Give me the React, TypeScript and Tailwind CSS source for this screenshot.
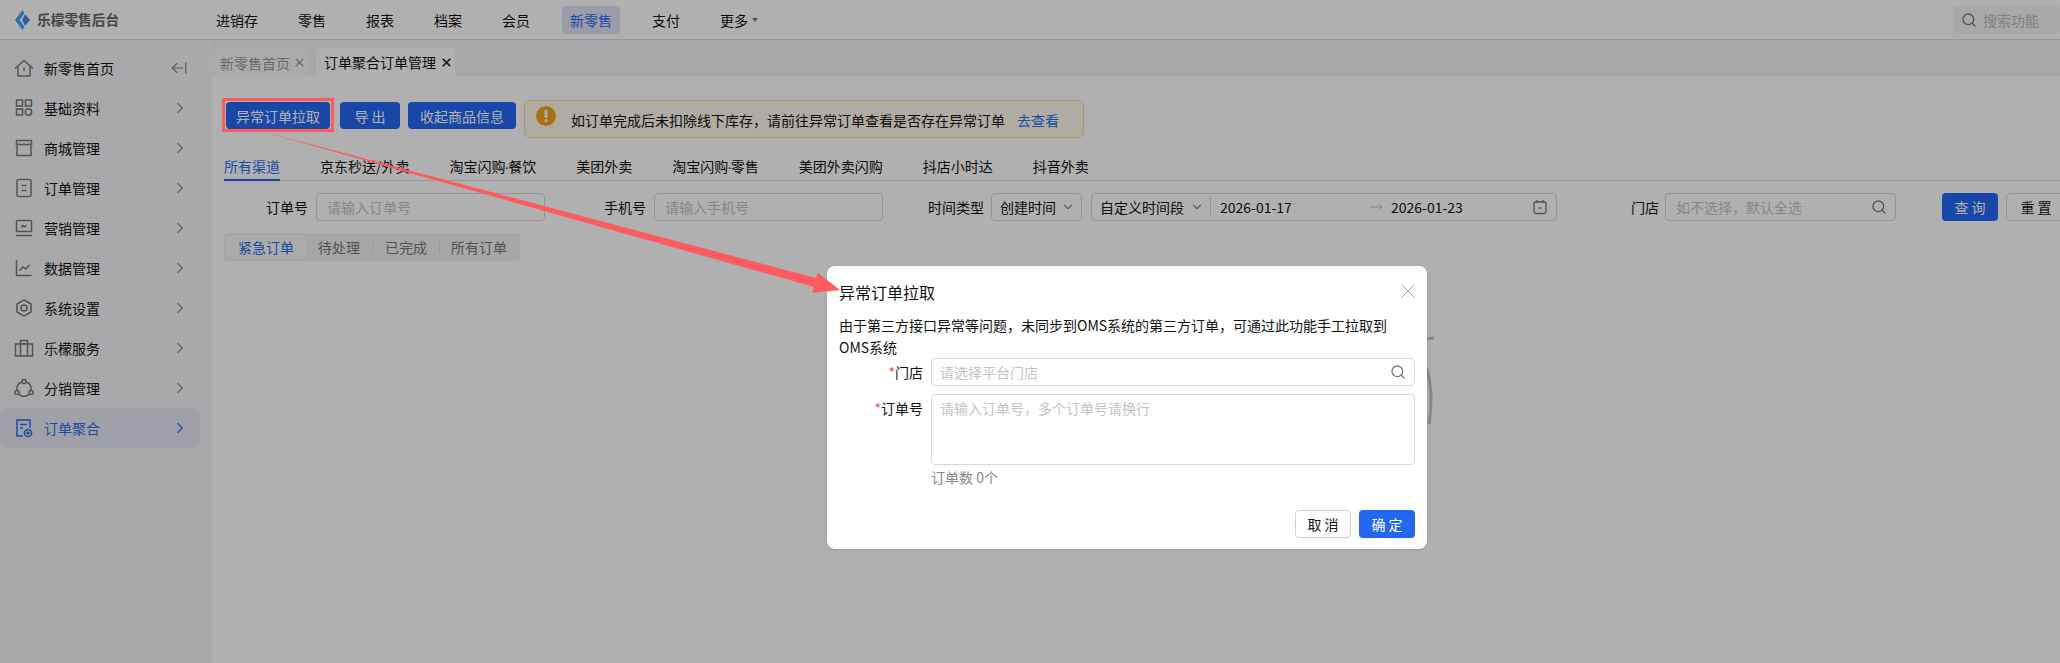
import React from 'react'
import { ArrowLeftFromLine, ChevronDown, ChevronRight, MoveRight, Search, X } from 'lucide-react'

const navItems = ['进销存', '零售', '报表', '档案', '会员', '新零售', '支付']
const channels = ['所有渠道', '京东秒送/外卖', '淘宝闪购|餐饮', '美团外卖', '淘宝闪购|零售', '美团外卖闪购', '抖店小时达', '抖音外卖']

const iconProps = {
    viewBox: '0 0 20 20',
    fill: 'none',
    stroke: 'currentColor',
    strokeWidth: 1.5,
    className: 'w-5 h-5 shrink-0',
}

const sideItems: { label: string; icon: React.ReactNode }[] = [
    {
        label: '新零售首页',
        icon: (
            <svg {...iconProps}>
                <path d="M1 10.5 10 2.5l9 8M4 8.5V18h12V8.5M10 9.5v3.5" />
            </svg>
        ),
    },
    {
        label: '基础资料',
        icon: (
            <svg {...iconProps}>
                <rect x="2.5" y="2" width="6" height="6" />
                <rect x="11.5" y="2" width="6" height="6" />
                <rect x="2.5" y="11" width="6" height="6" />
                <circle cx="14.5" cy="14" r="3.2" />
            </svg>
        ),
    },
    {
        label: '商城管理',
        icon: (
            <svg {...iconProps}>
                <path d="M3 8v9.5h14V8M2.5 2.5h15V7l-2.5-1-2.5 1-2.5-1-2.5 1-2.5-1-2.5 1z" />
            </svg>
        ),
    },
    {
        label: '订单管理',
        icon: (
            <svg {...iconProps}>
                <rect x="3" y="1.5" width="14" height="17" rx="1.5" />
                <path d="M7.5 7.5h5M7.5 12.5h5" />
            </svg>
        ),
    },
    {
        label: '营销管理',
        icon: (
            <svg {...iconProps}>
                <rect x="2.5" y="2.5" width="15" height="11" rx="1" />
                <path d="M2 17.5h16M7 9.5l2-2 1.5 1.5 2-2" />
            </svg>
        ),
    },
    {
        label: '数据管理',
        icon: (
            <svg {...iconProps}>
                <path d="M2.5 2v15.5h15M5.5 12.5l3.5-3.5 2.5 2 4-4" />
            </svg>
        ),
    },
    {
        label: '系统设置',
        icon: (
            <svg {...iconProps}>
                <path d="M10 2l7 4v8l-7 4-7-4V6z" />
                <circle cx="10" cy="10" r="3" />
            </svg>
        ),
    },
    {
        label: '乐檬服务',
        icon: (
            <svg {...iconProps}>
                <rect x="1.5" y="6" width="17" height="12" />
                <path d="M6.5 6V2.5h7V6M6.5 6v12M13.5 6v12" />
            </svg>
        ),
    },
    {
        label: '分销管理',
        icon: (
            <svg {...iconProps}>
                <path d="M7.5 4a7.5 7.5 0 0 0-4.5 8M17 12a7.5 7.5 0 0 0-4.5-8M4.5 16a7.5 7.5 0 0 0 11 0" />
                <circle cx="10" cy="3.5" r="2" />
                <circle cx="3" cy="14.5" r="2" />
                <circle cx="17" cy="14.5" r="2" />
            </svg>
        ),
    },
    {
        label: '订单聚合',
        icon: (
            <svg {...iconProps}>
                <path d="M9 18H3V2h13v8M6 6.5h7M6 10h3" />
                <circle cx="14" cy="15" r="3.6" />
                <circle cx="14" cy="15" r="1" />
            </svg>
        ),
    },
]

const fieldClass = 'shrink-0 h-7 px-2.5 border border-[#d9d9d9] rounded-[4px] bg-white text-sm outline-none placeholder:text-[#c4c4c4]'

const Logo = () => (
    <svg viewBox="0 0 15 20" className="w-[15px] h-5 shrink-0">
        <path d="M7.5 0 9.5 3.2 4.6 10l4.9 6.8L7.5 20 0 10z" fill="#4c9ff0" />
        <path d="M10.2 4.2 15 10l-4.8 5.8L7 10z" fill="#3f87e6" />
    </svg>
)

const App = () => {
    return (
        <div className="relative w-[2060px] h-[663px] overflow-hidden bg-white text-sm text-[#111] font-['Noto_Sans_CJK_SC',sans-serif]">
            {/* top bar */}
            <header className="flex items-center h-10 border-b border-[#dcdcdc]">
                <div className="flex items-center w-[208px] pl-[15px] gap-[7px]">
                    <Logo />
                    <span className="font-semibold text-[#666] text-[13.7px]">乐檬零售后台</span>
                </div>
                <nav className="flex gap-6">
                    {navItems.map((item) => (
                        <span
                            key={item}
                            className={
                                item === '新零售'
                                    ? 'h-7 px-2 leading-7 rounded bg-[#dfe4f5] text-[#2c6cf0]'
                                    : 'h-7 px-2 leading-7'
                            }
                        >
                            {item}
                        </span>
                    ))}
                    <span className="h-7 px-2 leading-7 flex items-center gap-1">
                        更多
                        <span className="w-0 h-0 border-x-[3.5px] border-x-transparent border-t-4 border-t-[#777]" />
                    </span>
                </nav>
                <div className="ml-auto flex items-center w-[107px] h-7 pl-2 gap-1.5 rounded bg-[#f2f3f5] text-[#bbb]">
                    <Search size={16} className="text-[#777]" />
                    <span>搜索功能</span>
                </div>
            </header>

            <div className="flex h-[623px]">
                {/* sidebar */}
                <aside className="w-[212px] shrink-0 pt-2 bg-[#f5f5f8]">
                    {sideItems.map((item, index) => {
                        const active = item.label === '订单聚合'
                        return (
                            <div
                                key={item.label}
                                className={
                                    active
                                        ? 'flex items-center h-10 w-[200px] pl-[14px] rounded-lg bg-[#e8eaf3] text-[#2c6cf0]'
                                        : 'flex items-center h-10 w-[200px] pl-[14px]'
                                }
                            >
                                <span className={active ? 'text-[#2c6cf0]' : 'text-[#777]'}>{item.icon}</span>
                                <span className="ml-[10px] flex-1">{item.label}</span>
                                {index === 0 ? (
                                    <ArrowLeftFromLine size={18} strokeWidth={1.5} className="mr-[12px] text-[#888]" />
                                ) : (
                                    <ChevronRight
                                        size={18}
                                        strokeWidth={1.5}
                                        className={active ? 'mr-[11px] text-[#2c6cf0]' : 'mr-[11px] text-[#888]'}
                                    />
                                )}
                            </div>
                        )
                    })}
                </aside>

                <main className="flex-1 min-w-0">
                    {/* page tabs */}
                    <div className="flex items-end h-9 gap-1.5 bg-[#f1f2f5]">
                        <div className="flex items-center gap-[3px] w-[98px] h-[27px] pl-2 rounded-t bg-[#f7f7f9] text-[#999]">
                            新零售首页
                            <X size={13} strokeWidth={2.5} />
                        </div>
                        <div className="flex items-center gap-1 w-[139px] h-7 pl-2 rounded-t bg-white">
                            订单聚合订单管理
                            <X size={13} strokeWidth={3} />
                        </div>
                    </div>

                    <div className="pl-3 pt-6">
                        {/* actions + notice */}
                        <div className="flex items-start h-[38px]">
                            <button className="ml-[2px] mt-[2px] w-[104px] h-[27px] rounded-sm bg-[#2468f2] text-white">异常订单拉取</button>
                            <button className="ml-[10px] mt-[2px] w-[60px] h-[27px] rounded bg-[#2468f2] text-white">导 出</button>
                            <button className="ml-2 mt-[2px] w-[108px] h-[27px] rounded bg-[#2468f2] text-white">收起商品信息</button>
                            <div className="relative ml-2 w-[560px] h-[38px] rounded-md border border-[#fbdc8f] bg-[#fffaeb] pl-[46px] pt-[9px]">
                                <svg viewBox="0 0 20 20" className="absolute left-[11px] top-[5px] w-5 h-5">
                                    <circle cx="10" cy="10" r="10" fill="#f2a516" />
                                    <rect x="8.5" y="4" width="3" height="8" rx="1" fill="#fff" />
                                    <rect x="8.5" y="13" width="3" height="3" rx="1" fill="#fff" />
                                </svg>
                                如订单完成后未扣除线下库存，请前往异常订单查看是否存在异常订单
                                <span className="ml-3 text-[#2c6cf0]">去查看</span>
                            </div>
                        </div>

                        {/* channels */}
                        <div className="flex gap-10 h-[29px] mt-[14px] border-b border-[#dcdcdc]">
                            {channels.map((channel, index) => {
                                const [head, tail] = channel.split('|')
                                return (
                                    <span
                                        key={channel}
                                        className={
                                            index === 0
                                                ? 'h-[29px] leading-7 border-b-2 border-[#2468f2] text-[#2c6cf0]'
                                                : 'h-[29px] leading-7'
                                        }
                                    >
                                        {head}
                                        {tail && <span className="-mx-px font-['Liberation_Sans']">·</span>}
                                        {tail}
                                    </span>
                                )
                            })}
                        </div>

                        {/* filters */}
                        <div className="flex items-center h-7 mt-3 whitespace-nowrap">
                            <span className="ml-[42px] shrink-0">订单号</span>
                            <input className={`ml-2 w-[229px] ${fieldClass}`} placeholder="请输入订单号" />
                            <span className="ml-[59px] shrink-0">手机号</span>
                            <input className={`ml-2 w-[229px] ${fieldClass}`} placeholder="请输入手机号" />
                            <span className="ml-[45px] shrink-0">时间类型</span>
                            <div className="flex shrink-0 items-center justify-between ml-[7px] w-[91px] h-7 pl-2 pr-1.5 border border-[#d9d9d9] rounded">
                                创建时间
                                <ChevronDown size={14} className="text-[#888]" />
                            </div>
                            <div className="flex shrink-0 items-center ml-[9px] w-[466px] h-7 pl-2 pr-2 border border-[#d9d9d9] rounded">
                                自定义时间段
                                <ChevronDown size={14} className="ml-1.5 text-[#888]" />
                                <span className="ml-1.5 w-px h-5 bg-[#d9d9d9]" />
                                <span className="ml-[9px] w-[149px]">2026-01-17</span>
                                <MoveRight size={14} strokeWidth={1} className="text-[#999]" />
                                <span className="ml-[8px]">2026-01-23</span>
                                <svg viewBox="0 0 16 16" className="ml-auto w-4 h-4 text-[#777]" fill="none" stroke="currentColor" strokeWidth="1.3">
                                    <rect x="2" y="3" width="12" height="11.5" rx="1.5" />
                                    <path d="M5 1v2.5M11 1v2.5M6.5 9h3" />
                                </svg>
                            </div>
                            <span className="ml-[74px] shrink-0">门店</span>
                            <div className="flex shrink-0 items-center ml-1.5 w-[231px] h-7 pr-2 border border-[#d9d9d9] rounded">
                                <input className="flex-1 min-w-0 pl-2.5 text-sm outline-none placeholder:text-[#c4c4c4]" placeholder="如不选择，默认全选" />
                                <Search size={16} className="text-[#777]" />
                            </div>
                            <button className="ml-[46px] shrink-0 w-14 h-7 rounded bg-[#2468f2] text-white">查 询</button>
                            <button className="ml-2 shrink-0 w-[60px] h-7 rounded border border-[#d9d9d9] bg-white">重 置</button>
                        </div>

                        {/* status tabs */}
                        <div className="flex items-center w-[296px] h-7 mt-3 px-0.5 rounded bg-[#f0f1f3] text-[#777]">
                            <span className="w-20 h-6 leading-6 text-center rounded bg-[#f8f8f9] text-[#2c6cf0]">紧急订单</span>
                            <span className="w-[66px] text-center">待处理</span>
                            <span className="w-px h-3 bg-[#d9d9d9]" />
                            <span className="w-[66px] text-center">已完成</span>
                            <span className="w-px h-3 bg-[#d9d9d9]" />
                            <span className="flex-1 text-center">所有订单</span>
                        </div>
                    </div>
                </main>
            </div>

            {/* empty state peeking out behind the dialog */}
            <svg viewBox="0 0 20 100" className="absolute left-[1420px] top-[330px] w-5 h-[100px]" fill="none" stroke="#c4c4c4" strokeWidth="3">
                <path d="M7 38Q14 66 9 94M7 9l7-1" />
            </svg>

            <div className="absolute inset-0 bg-black/[0.31]" />

            {/* dialog */}
            <div className="absolute left-[827px] top-[266px] w-[600px] h-[283px] px-3 rounded-lg bg-white shadow-sm">
                <div className="flex items-center justify-between h-[52px]">
                    <span className="text-base">异常订单拉取</span>
                    <X size={24} strokeWidth={0.8} className="-mr-[5px] -mt-[3px] text-[#888]" />
                </div>
                <p className="leading-[22px] -mt-1">
                    由于第三方接口异常等问题，未同步到OMS系统的第三方订单，可通过此功能手工拉取到OMS系统
                </p>
                <div className="flex">
                    <span className="w-[84px] leading-7 text-right"><span className="text-[#f04848]">*</span>门店</span>
                    <div className="flex items-center ml-2 w-[484px] h-7 pr-2 border border-[#d9d9d9] rounded">
                        <input className="flex-1 min-w-0 pl-2 text-sm outline-none placeholder:text-[#c4c4c4]" placeholder="请选择平台门店" />
                        <Search size={16} className="text-[#777]" />
                    </div>
                </div>
                <div className="flex mt-2">
                    <span className="w-[84px] leading-7 text-right"><span className="text-[#f04848]">*</span>订单号</span>
                    <textarea
                        className="ml-2 w-[484px] h-[71px] px-2 py-[3px] border border-[#d9d9d9] rounded text-sm resize-none outline-none placeholder:text-[#c4c4c4]"
                        placeholder="请输入订单号，多个订单号请换行"
                    />
                </div>
                <div className="ml-[92px] mt-[2px] text-[#888]">订单数 0个</div>
                <div className="flex justify-end gap-2 mt-[23px]">
                    <button className="w-14 h-7 rounded border border-[#d0d0d0] bg-white">取 消</button>
                    <button className="w-14 h-7 rounded bg-[#2468f2] text-white">确 定</button>
                </div>
            </div>

            {/* red annotation over the screenshot */}
            <svg viewBox="0 0 2060 663" className="absolute inset-0 w-[2060px] h-[663px] pointer-events-none">
                <rect x="223.5" y="99.5" width="109" height="31" fill="none" stroke="#ff5a5f" strokeWidth="3" />
                <polygon points="257,130 816,278 818,273 840,290 812,293 814,287" fill="#ff5a5f" />
            </svg>
        </div>
    )
}

export default App
